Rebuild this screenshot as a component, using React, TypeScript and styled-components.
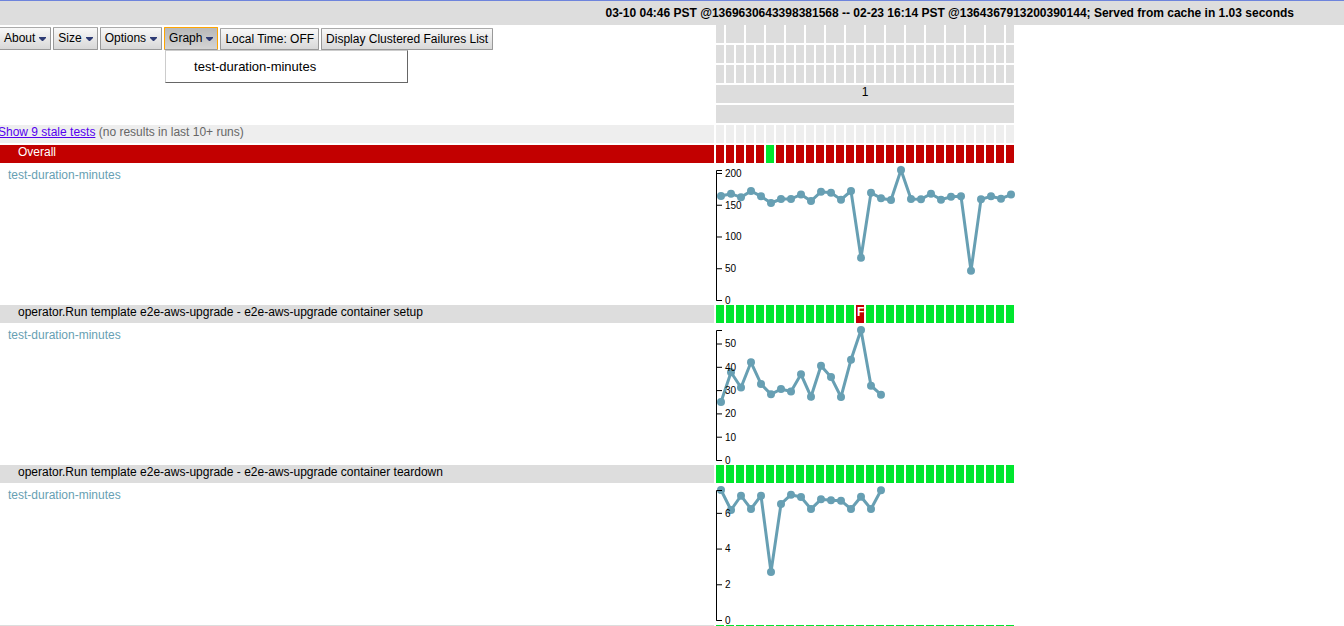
import React from "react";
import styled, { createGlobalStyle, css } from "styled-components";

const COLUMNS = 30;
const ROW = 18;

const GlobalStyle = createGlobalStyle`
  body {
    margin: 0;
    background: #fff;
    color: #000;
    font: 12px/14px "Liberation Sans", Arial, sans-serif;
    overflow: hidden;
  }
`;

const Page = styled.div`
  height: 100vh;
  overflow: hidden;
`;

const StatusBar = styled.header`
  box-sizing: border-box;
  height: 25px;
  padding: 5px 50px 0 0;
  border-top: 1px solid #6e84dc;
  background: #ddd;
  font-weight: bold;
  text-align: right;
`;

const Board = styled.main`
  display: grid;
  gap: 2px;
  padding-right: 330px;
`;

const BoardRow = styled.div`
  display: grid;
  grid-template-columns: minmax(0, 1fr) 298px;
  gap: 2px;
`;

const Toolbar = styled.nav`
  display: flex;
  align-items: flex-end;
  align-self: start;
  gap: 2px;
  height: 25px;
  margin-left: -1px;
`;

const MenuHolder = styled.div`
  position: relative;
  display: flex;
`;

const ToolButton = styled.button<{ $menu?: boolean; $open?: boolean }>`
  box-sizing: border-box;
  display: flex;
  align-items: center;
  gap: 4px;
  height: ${(p) => (p.$menu ? 23 : 22)}px;
  margin: 0;
  padding: ${(p) => (p.$menu ? "0 4px 1px" : "0 4px")};
  border: 1px solid #999;
  border-top-color: #aaa;
  border-radius: 1px;
  background: linear-gradient(#f8f8f8, #d8d8d8);
  color: #000;
  font: inherit;
  white-space: nowrap;
  ${(p) =>
    p.$open &&
    css`
      border-color: orange orange #999 orange;
      background: linear-gradient(#b8b8b8, #d4d4d4);
    `}
`;

const Dropdown = styled.div`
  position: absolute;
  z-index: 1;
  top: 23px;
  left: 1px;
  box-sizing: border-box;
  width: 243px;
  height: 33px;
  border: 1px solid;
  border-color: #ccc #666 #666 #ccc;
  background: #fff;
`;

const DropdownItem = styled.button`
  width: 100%;
  height: 100%;
  padding: 0 28px;
  border: 0;
  background: none;
  color: #000;
  font: 13px/15px "Liberation Sans", Arial, sans-serif;
  text-align: left;
`;

const HeaderRows = styled.div`
  display: grid;
  gap: 2px;
`;

const Cells = styled.div`
  display: grid;
  grid-template-columns: repeat(${COLUMNS}, 8px);
  gap: 2px;
  height: ${ROW}px;
`;

const tones = {
  header: "#ddd",
  stale: "#eee",
  pass: "#00e62e",
  fail: "#c20000",
};
type Tone = keyof typeof tones;

const Cell = styled.div<{ $tone: Tone; $span?: number }>`
  grid-column: span ${(p) => p.$span ?? 1};
  overflow: hidden;
  background: ${(p) => tones[p.$tone]};
  text-align: center;
  ${(p) =>
    p.$tone === "fail" &&
    css`
      padding-left: 1px;
      color: #fff;
      font-weight: bold;
      text-align: left;
    `}
`;

const TestName = styled.div<{ $tone: Tone }>`
  box-sizing: border-box;
  height: ${ROW}px;
  padding-left: 18px;
  background: ${(p) => tones[p.$tone]};
  color: ${(p) => (p.$tone === "fail" ? "#fff" : "#000")};
`;

const StaleNote = styled.div`
  height: ${ROW}px;
  margin-left: -2px;
  background: #eee;
  color: #666;
`;

const StaleLink = styled.a`
  color: #50e;
`;

const MetricName = styled.div`
  padding: 3px 8px;
  color: #679fb3;
`;

const ChartSvg = styled.svg`
  display: block;
  width: 298px;
  height: 138px;
  overflow: visible;
  font: 10px "Liberation Sans", Arial, sans-serif;
`;

const ArrowSvg = styled.svg`
  width: 7px;
  height: 4px;
  margin-top: 2px;
`;

const Arrow = () => (
  <ArrowSvg viewBox="0 0 7 4" aria-hidden="true">
    <path d="M0 0H7V1L4 4H3L0 1Z" fill="#2f3c75" />
  </ArrowSvg>
);

interface Series {
  max: number;
  step: number;
  ys: number[];
}

/* The plot area runs from y = 5.5 (max) to y = 135.5 (zero). */
const Chart = ({ max, step, ys }: Series) => {
  const ticks: number[] = [];
  for (let v = 0; v <= max; v += step) ticks.push(v);
  return (
    <ChartSvg role="img" aria-label="test-duration-minutes">
      <polyline
        points={ys.map((y, i) => `${5 + i * 10},${y}`).join(" ")}
        fill="none"
        stroke="#679fb3"
        strokeWidth="3"
      />
      {ys.map((y, i) => (
        <circle key={i} cx={5 + i * 10} cy={y} r="4" fill="#679fb3" />
      ))}
      <path d="M6 5.5H0.5V135.5H6" fill="none" stroke="#000" />
      {ticks.map((v) => {
        const y = 135.5 - (v / max) * 130;
        return (
          <g key={v}>
            <line x1="0.5" x2="6" y1={y} y2={y} stroke="#000" />
            <text x="9" y={y + 3.4}>
              {v}
            </text>
          </g>
        );
      })}
    </ChartSvg>
  );
};

interface Test {
  name: string;
  tone: Tone;
  base: Tone;
  odd?: { at: number; tone: Tone; label?: string };
  series?: Series;
}

const tests: Test[] = [
  {
    name: "Overall",
    tone: "fail",
    base: "fail",
    odd: { at: 5, tone: "pass" },
    series: {
      max: 204.7,
      step: 50,
      ys: [
        31, 28.7, 32.3, 26, 31.3, 38, 34, 34, 29.5, 36, 26.7, 27.7, 34.7, 26,
        92.8, 27.7, 33.3, 35, 5, 34, 34.3, 28.8, 34.7, 31.8, 31.3, 105.8, 34.3,
        31.3, 33.7, 29.6,
      ],
    },
  },
  {
    name: "operator.Run template e2e-aws-upgrade - e2e-aws-upgrade container setup",
    tone: "header",
    base: "pass",
    odd: { at: 14, tone: "fail", label: "F" },
    series: {
      max: 55.8,
      step: 10,
      ys: [
        77, 47.3, 62.5, 37.3, 59, 69.3, 64, 66.5, 49.3, 71.7, 40.7, 52, 72,
        34.7, 5, 60.7, 69.7,
      ],
    },
  },
  {
    name: "operator.Run template e2e-aws-upgrade - e2e-aws-upgrade container teardown",
    tone: "header",
    base: "pass",
    series: {
      max: 7.28,
      step: 2,
      ys: [
        5, 25, 10.7, 24, 10.7, 87, 19, 9.7, 12, 24, 14.3, 15.3, 15.7, 24, 11.7,
        24, 5.3,
      ],
    },
  },
  { name: "", tone: "header", base: "pass" },
];

const Uniform = ({ tone }: { tone: Tone }) => (
  <Cells>
    {Array.from({ length: COLUMNS }, (_, i) => (
      <Cell key={i} $tone={tone} />
    ))}
  </Cells>
);

export default function App() {
  return (
    <>
      <GlobalStyle />
      <Page>
        <StatusBar>
          03-10 04:46 PST @1369630643398381568 -- 02-23 16:14 PST
          @1364367913200390144; Served from cache in 1.03 seconds
        </StatusBar>
        <Board>
          <BoardRow>
            <Toolbar>
              {["About", "Size", "Options", "Graph"].map((label) => (
                <MenuHolder key={label}>
                  <ToolButton
                    $menu
                    $open={label === "Graph"}
                    aria-haspopup="menu"
                    aria-expanded={label === "Graph"}
                  >
                    {label}
                    <Arrow />
                  </ToolButton>
                  {label === "Graph" && (
                    <Dropdown>
                      <DropdownItem>test-duration-minutes</DropdownItem>
                    </Dropdown>
                  )}
                </MenuHolder>
              ))}
              <ToolButton>Local Time: OFF</ToolButton>
              <ToolButton>Display Clustered Failures List</ToolButton>
            </Toolbar>
            <HeaderRows>
              <Cells>
                <Cell $tone="header" />
                {Array.from({ length: 14 }, (_, i) => (
                  <Cell key={i} $tone="header" $span={2} />
                ))}
                <Cell $tone="header" />
              </Cells>
              <Uniform tone="header" />
              <Uniform tone="header" />
              <Cells>
                <Cell $tone="header" $span={COLUMNS}>
                  1
                </Cell>
              </Cells>
              <Cells>
                <Cell $tone="header" $span={COLUMNS} />
              </Cells>
            </HeaderRows>
          </BoardRow>
          <BoardRow>
            <StaleNote>
              <StaleLink href="#stale">Show 9 stale tests</StaleLink> (no
              results in last 10+ runs)
            </StaleNote>
            <Uniform tone="stale" />
          </BoardRow>
          {tests.map((test) => (
            <React.Fragment key={test.name}>
              <BoardRow>
                <TestName $tone={test.tone}>{test.name}</TestName>
                <Cells>
                  {Array.from({ length: COLUMNS }, (_, i) => {
                    const odd = test.odd?.at === i ? test.odd : undefined;
                    return (
                      <Cell key={i} $tone={odd?.tone ?? test.base}>
                        {odd?.label}
                      </Cell>
                    );
                  })}
                </Cells>
              </BoardRow>
              {test.series && (
                <BoardRow>
                  <MetricName>test-duration-minutes</MetricName>
                  <Chart {...test.series} />
                </BoardRow>
              )}
            </React.Fragment>
          ))}
        </Board>
      </Page>
    </>
  );
}
